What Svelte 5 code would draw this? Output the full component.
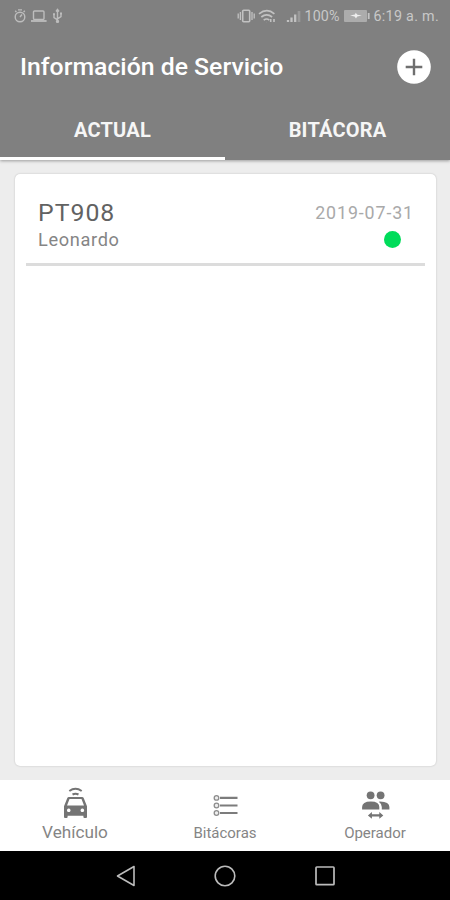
<script>
  const services = [{ id: 'PT908', driver: 'Leonardo', date: '2019-07-31' }];
</script>

<div class="screen">
  <header>
    <div class="status">
      <svg class="left" width="52" height="16" viewBox="0 0 52 16" fill="none" stroke="#bdbdbd" stroke-width="1.4">
        <circle cx="7" cy="9" r="4.8" />
        <path d="M5 1.9h4M7 9l2-2.5M10.6 4l1.2-1.2M3.4 4L2.2 2.8" />
        <rect x="20.5" y="3" width="10.5" height="8.5" rx="1" />
        <path d="M18 13h15.6" stroke-width="1.8" />
        <path d="M44.5 2v12M41 6.5v3l3.5 2.3M48 5.5v3l-3.5 2.3M43 3.5l1.5-2 1.5 2" />
        <circle cx="44.5" cy="13.4" r="1" fill="#bdbdbd" />
        <path d="M40 6.2h2M47 5.6h2" stroke-width="2" />
      </svg>
      <svg class="right" width="66" height="16" viewBox="0 0 66 16" fill="none" stroke="#c2c2c2" stroke-width="1.6">
        <rect x="5.7" y="2.2" width="7" height="11.6" rx="1" />
        <path d="M3.4 4v8M1.2 5.5v5M15 4v8M17.2 5.5v5" stroke-width="1.3" />
        <path d="M22 5.8q8-6.3 15.4 0M24.3 9q5.4-4.4 10.8 0M26.7 12.1q3-2.2 5.6 0" stroke-width="1.7" />
        <path d="M29.5 14.2h.1M33.7 11v3M37 11v3" stroke-width="1.6" />
        <path d="M51 14v-2M54.5 14V9.5M58.2 14V6.5" stroke-width="2.3" />
        <path d="M62 14V3" stroke="#999" stroke-width="2.6" />
      </svg>
      <span class="percent">100%</span>
      <svg class="battery" width="27" height="14" viewBox="0 0 27 14">
        <rect x="0" y="1" width="23" height="12" rx="1" fill="#acacac" />
        <rect x="23.8" y="4" width="1.8" height="6" fill="#c4c4c4" />
        <path d="M6 6.6l5-1 .7-1.8 1.6 2 4.5.7-4.6 1.1-1.2 2-1.4-2z" fill="#eee" />
      </svg>
      <span class="clock">6:19 a. m.</span>
    </div>
    <div class="titlebar">
      <h1>Información de Servicio</h1>
      <button class="add" aria-label="Agregar">
        <svg width="34" height="34" viewBox="0 0 34 34">
          <circle cx="17" cy="17" r="16.8" fill="#fff" />
          <path d="M17 8.7v16.6M8.7 17h16.6" stroke="#6f6f6f" stroke-width="2.4" />
        </svg>
      </button>
    </div>
    <nav class="tabs">
      <div class="tab active"><span class="actual">ACTUAL</span></div>
      <div class="tab"><span class="log">BITÁCORA</span></div>
    </nav>
  </header>

  <main>
    <section class="card">
      {#each services as service}
        <article>
          <div class="line first">
            <span class="id">{service.id}</span>
            <span class="date">{service.date}</span>
          </div>
          <div class="line second">
            <span class="driver">{service.driver}</span>
            <i class="dot"></i>
          </div>
        </article>
      {/each}
    </section>
  </main>

  <nav class="bottom">
    <div class="item">
      <svg width="36" height="36" viewBox="-.5 0 36 36" fill="none">
        <path d="M11.8 5q6.2-4.4 12.4 0M15 8.5q3-1.6 6 0" stroke="#747474" stroke-width="2" />
        <path fill="#747474" fill-rule="evenodd" d="M9.7 12.3Q10.1 11 11.5 11h13q1.4 0 1.8 1.3l3.2 8V31q0 1-1 1h-1.6q-1 0-1-1v-1.3H10.1V31q0 1-1 1H7.5q-1 0-1-1V20.3zM12 13l-2.5 6.5h17L24 13zM11.2 22.5a1.8 1.8 0 1 0 .1 0zM24.8 22.5a1.8 1.8 0 1 0 .1 0z" />
      </svg>
      <span class="vehicle">Vehículo</span>
    </div>
    <div class="item">
      <svg width="36" height="36" viewBox="-.5 0 36 36" fill="none" stroke="#7c7c7c">
        <path d="M12.5 11.9H30M12.5 19.5H30M12.5 27H30" stroke-width="2.2" />
        <g stroke="#8d8d8d" stroke-width="1.3" fill="#eee">
          <circle cx="9" cy="11.9" r="2.3" /><circle cx="9" cy="19.5" r="2.3" /><circle cx="9" cy="27" r="2.3" />
        </g>
      </svg>
      <span class="logs">Bitácoras</span>
    </div>
    <div class="item">
      <svg width="36" height="36" viewBox="-.6 0 36 36" fill="#747474">
        <circle cx="13" cy="9.3" r="3.9" />
        <circle cx="23" cy="9.3" r="3.9" />
        <path d="M4.5 23.4V21q0-5.6 8.7-5.6T21.7 21v2.4zM22.5 15.5q9.3.3 9.3 5.5v2.4h-7.6V21q0-3.2-3-5.3z" />
        <path d="M10.3 29.4l4-3.3v2.2h7.4v-2.2l4 3.3-4 3.3v-2.2h-7.4v2.2z" />
      </svg>
      <span class="operator">Operador</span>
    </div>
  </nav>

  <footer>
    <svg width="22" height="24" viewBox="0 0 22 24" fill="none" stroke="#bcbcbc" stroke-width="1.6" stroke-linejoin="round"><path d="M19 2.5v19L2.5 12z" /></svg>
    <svg width="24" height="24" viewBox="0 0 24 24" fill="none" stroke="#bcbcbc" stroke-width="1.6"><circle cx="12" cy="12" r="9.8" /></svg>
    <svg width="24" height="24" viewBox="0 0 24 24" fill="none" stroke="#bcbcbc" stroke-width="1.7"><rect x="3" y="3" width="18" height="17.7" rx=".8" /></svg>
  </footer>
</div>

<style>
  .screen {
    width: 450px;
    height: 900px;
    display: flex;
    flex-direction: column;
    overflow: hidden;
    background: #ededed;
    font-family: Roboto, "Liberation Sans", sans-serif;
  }
  svg { display: block; flex: none; }
  span, h1 { white-space: nowrap; }
  header {
    height: 160px;
    flex: none;
    background: #808080;
    box-shadow: 0 1px 3px rgba(0, 0, 0, .35);
    z-index: 1;
  }
  .status {
    display: flex;
    align-items: center;
    height: 32px;
    padding-left: 13px;
    color: #c8c8c8;
    font-size: 14.3px;
  }
  .right { margin-left: 172px; }
  .percent { width: 39px; margin-left: 1.5px; letter-spacing: .1px; }
  .clock { margin-left: 3px; letter-spacing: .3px; }
  .titlebar {
    display: flex;
    align-items: center;
    justify-content: space-between;
    height: 69px;
    padding: 0 19px 0 20px;
  }
  h1 { margin: 0; color: #fff; font-size: 24.8px; font-weight: 500; }
  .add { border: 0; padding: 0; background: none; }
  .tabs { display: flex; height: 59px; }
  .tab {
    flex: 1;
    display: flex;
    align-items: center;
    justify-content: center;
    box-sizing: border-box;
    padding-top: 2px;
    border-bottom: 3px solid transparent;
    color: #f6f6f6;
    font-size: 20px;
    font-weight: 700;
    letter-spacing: .2px;
  }
  .tab.active { border-color: #fff; }
  main {
    flex: 1;
    display: flex;
    padding: 14px 14px 14px 15px;
  }
  .card {
    flex: 1;
    background: #fff;
    border-radius: 5px;
    box-shadow: 0 0 2px rgba(0, 0, 0, .22);
    padding: 0 11px;
  }
  article {
    height: 89px;
    border-bottom: 3px solid #dcdcdc;
    padding: 0 12px;
  }
  .line { display: flex; justify-content: space-between; align-items: center; }
  .first { padding-top: 23px; height: 30px; }
  .second { height: 24px; }
  .id { font-size: 24.8px; color: #626262; font-weight: 400; letter-spacing: 1px; }
  .date { font-size: 17.8px; color: #a9a9a9; font-weight: 400; letter-spacing: .9px; margin-right: -1px; }
  .driver { font-size: 18.2px; color: #858585; font-weight: 400; letter-spacing: .65px; }
  .dot { width: 17px; height: 17px; margin-right: 12.5px; border-radius: 50%; background: #00dc5a; }
  .bottom {
    display: flex;
    height: 71px;
    flex: none;
    background: #fff;
  }
  .item {
    flex: 1;
    display: flex;
    flex-direction: column;
    align-items: center;
    padding-top: 6px;
    color: #858585;
  }
  .item span { line-height: 22px; font-size: 15px; }
  .item .vehicle { line-height: 20px; font-size: 17.2px; }
  footer {
    display: flex;
    justify-content: center;
    align-items: center;
    gap: 76px;
    height: 49px;
    flex: none;
    padding-left: 2px;
    background: #000;
  }
</style>
